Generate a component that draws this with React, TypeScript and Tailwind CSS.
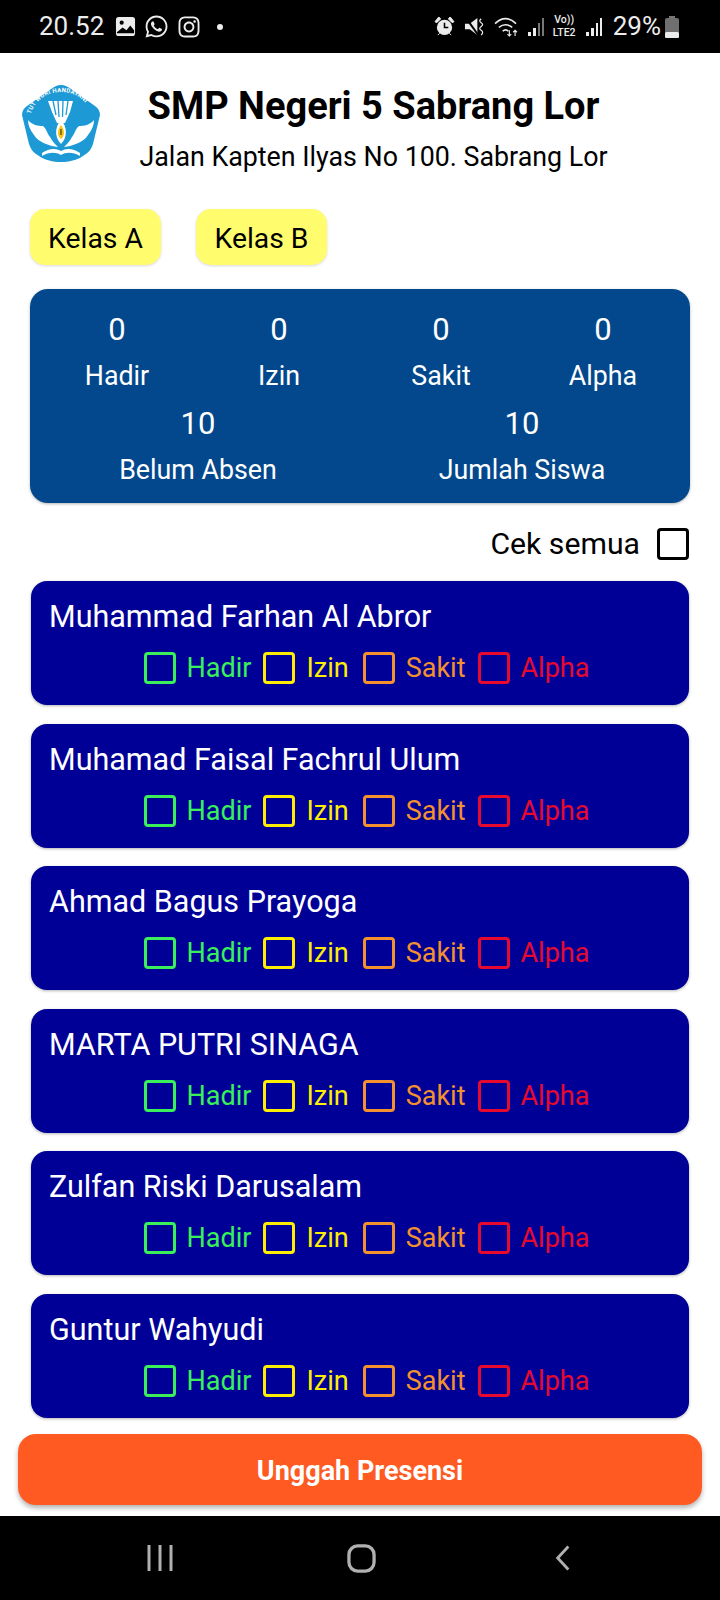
import { FaInstagram, FaWhatsapp } from 'react-icons/fa';

const students = [
  'Muhammad Farhan Al Abror',
  'Muhamad Faisal Fachrul Ulum',
  'Ahmad Bagus Prayoga',
  'MARTA PUTRI SINAGA',
  'Zulfan Riski Darusalam',
  'Guntur Wahyudi',
];

const statuses = [
  { label: 'Hadir', box: 'border-[#39f05a]', text: 'text-[#39f05a]', gap: 'mr-[12px]' },
  { label: 'Izin', box: 'border-[#ffee00]', text: 'text-[#ffee00]', gap: 'mr-[14px]' },
  { label: 'Sakit', box: 'border-[#f2912e]', text: 'text-[#f2912e]', gap: 'mr-[12px]' },
  { label: 'Alpha', box: 'border-[#e8092e]', text: 'text-[#e8092e]', gap: '' },
];

function Logo() {
  return (
    <svg viewBox="0 0 80 80" className="w-[80px] h-[80px] shrink-0">
      <path d="M40 1 C44 1 47 3 50 5 L74 22 C77 24 79 27 79 31 L72 60 C70 66 67 69 62 72 C50 80 30 80 18 72 C13 69 10 66 8 60 L1 31 C1 27 3 24 6 22 L30 5 C33 3 36 1 40 1 Z" fill="#1d9ad6" />
      <path id="logoArc" d="M9 32 C14 15 27 8 40 8 C53 8 66 15 71 32" fill="none" />
      <text fontSize="6" fontWeight="700" fill="#fff" fontFamily="Roboto, sans-serif" letterSpacing="0.3">
        <textPath href="#logoArc" startOffset="2">TUT WURI HANDAYANI</textPath>
      </text>
      <path d="M27 17 L52 17 L49 28 L44 39 L36 39 L31 28 Z" fill="#fff" />
      <path d="M32 17 L35 31 M37 17 L38 33 M42 17 L41.500 33 M47 17 L45 31" stroke="#1d9ad6" strokeWidth="1.3" fill="none" />
      <path d="M7 36 C11 41 17 42 22 42 C25 44 26 49 29 53 C31 57 34 60 37 63 C28 62 17 58 13 51 C9 46 7 41 7 36 Z" fill="#fff" />
      <path d="M73 36 C69 41 63 42 58 42 C55 44 54 49 51 53 C49 57 46 60 43 63 C52 62 63 58 67 51 C71 46 73 41 73 36 Z" fill="#fff" />
      <path d="M40 36 C46 42 47 53 40 60 C33 53 34 42 40 36 Z" fill="#fff" />
      <path d="M40 41 C44 46 44 52 40 55 C36 52 36 46 40 41 Z" fill="#f5c518" />
      <path d="M40 45 V51" stroke="#222" strokeWidth="1" />
      <path d="M21 69 C28 64 35 64 40 67 C45 64 52 64 59 69 L59 72 C52 68 45 68 40 71 C35 68 28 68 21 72 Z" fill="#fff" />
    </svg>
  );
}

function StatusBar() {
  return (
    <div className="h-[53px] shrink-0 bg-black text-[#ececec] flex items-center pl-[39px] pr-[41px] text-[26px] font-['Roboto',sans-serif]">
      <span className="mr-[11px]">20.52</span>
      <svg viewBox="0 0 22 22" className="w-[21px] h-[21px] mr-[8px]">
        <rect x="1" y="1" width="20" height="20" rx="3" fill="#ececec" />
        <circle cx="7" cy="7" r="2.2" fill="#000" />
        <path d="M2 17 L8 12 L12 15 L16 10 L20 15 V18 H2 Z" fill="#000" />
      </svg>
      <FaWhatsapp className="w-[25px] h-[25px] mr-[8px]" />
      <FaInstagram className="w-[24px] h-[24px] mr-[16px]" />
      <span className="w-[6px] h-[6px] rounded-full bg-[#ececec]" />
      <div className="ml-auto flex items-center">
        <svg viewBox="0 0 22 22" className="w-[21px] h-[21px] mr-[9px]">
          <circle cx="11" cy="12" r="8" fill="#ececec" />
          <path d="M11 7 V12 H15" stroke="#000" strokeWidth="1.6" fill="none" />
          <path d="M1 6 L5 1 L7 3 L3 7 Z M21 6 L17 1 L15 3 L19 7 Z M4 20 L6 18 M18 20 L16 18" fill="#ececec" stroke="#ececec" />
        </svg>
        <svg viewBox="0 0 22 22" className="w-[21px] h-[21px] mr-[8px]">
          <path d="M1 8 H6 L14 2 V20 L6 14 H1 Z" fill="#ececec" />
          <path d="M2 2 L15 20" stroke="#000" strokeWidth="2" />
          <path d="M18 3 Q15 5 18 7 Q21 9 18 11 Q15 13 18 15 Q21 17 18 20" stroke="#ececec" strokeWidth="1.3" fill="none" />
        </svg>
        <svg viewBox="0 0 28 22" className="w-[27px] h-[21px] mr-[7px]">
          <path d="M2 8 C9 1 17 1 24 8 M6 12 C11 8 15 8 20 12 M10 16 C12 14 14 14 16 16" stroke="#ececec" strokeWidth="1.7" fill="none" />
          <path d="M17 15 V21 M15 19 L17 21 L19 19 M23 21 V15 M21 17 L23 15 L25 17" stroke="#ececec" strokeWidth="1.2" fill="none" />
        </svg>
        <svg viewBox="0 0 18 20" className="w-[18px] h-[20px] mr-[6px]">
          <rect x="1" y="15" width="3" height="4" fill="#ececec" />
          <rect x="6" y="11" width="3" height="8" fill="#ececec" />
          <rect x="11" y="6" width="2" height="13" fill="#777" />
          <rect x="15" y="1" width="2" height="18" fill="#777" />
        </svg>
        <div className="text-center text-[10.5px] leading-[12.5px] font-medium mr-[7px] w-[27px]">
          Vo))<br />LTE2
        </div>
        <svg viewBox="0 0 18 20" className="w-[18px] h-[20px] mr-[10px]">
          <rect x="1" y="15" width="3" height="4" fill="#ececec" />
          <rect x="6" y="11" width="3" height="8" fill="#ececec" />
          <rect x="11" y="6" width="2" height="13" fill="#ececec" />
          <rect x="15" y="1" width="2" height="18" fill="#ececec" />
        </svg>
        <span className="mr-[4px]">29%</span>
        <svg viewBox="0 0 14 22" className="w-[14px] h-[22px]">
          <rect x="4" y="0" width="6" height="2" fill="#777" />
          <rect x="0" y="2" width="14" height="20" rx="2" fill="#6f6f6f" />
          <rect x="0" y="16" width="14" height="6" rx="1.5" fill="#ececec" />
        </svg>
      </div>
    </div>
  );
}

function Box({ className }: { className: string }) {
  return <span className={`w-[32px] h-[32px] shrink-0 border-[3px] rounded-[4px] ${className}`} />;
}

function StudentCard({ name }: { name: string }) {
  return (
    <div className="h-[124px] rounded-[16px] bg-[#000096] pl-[18px] pr-[18px] pt-[17px] shadow-[0_1px_3px_rgba(0,0,0,0.3)]">
      <div className="text-white text-[30.5px] leading-[38px]">{name}</div>
      <div className="mt-[16px] flex justify-center items-center pl-[13px] text-[27px] leading-[32px]">
        {statuses.map(s => (
          <div key={s.label} className={`flex items-center ${s.gap}`}>
            <Box className={s.box} />
            <span className={`ml-[11px] ${s.text}`}>{s.label}</span>
          </div>
        ))}
      </div>
    </div>
  );
}

export default function App() {
  const topStats = [
    { value: 0, label: 'Hadir' },
    { value: 0, label: 'Izin' },
    { value: 0, label: 'Sakit' },
    { value: 0, label: 'Alpha' },
  ];
  const bottomStats = [
    { value: 10, label: 'Belum Absen' },
    { value: 10, label: 'Jumlah Siswa' },
  ];

  return (
    <div className="w-[720px] h-[1600px] flex flex-col bg-white font-['Roboto',sans-serif]">
      <StatusBar />
      <div className="flex-1 flex flex-col">
        <div className="flex items-start pl-[21px] pt-[31px]">
          <Logo />
          <div className="flex-1 flex flex-col items-center pr-[74px]">
            <div className="text-black font-bold text-[38px] leading-[44px]">SMP Negeri 5 Sabrang Lor</div>
            <div className="text-black text-[26.8px] leading-[36px] mt-[11px]">Jalan Kapten Ilyas No 100. Sabrang Lor</div>
          </div>
        </div>

        <div className="flex gap-[35px] pl-[30px] mt-[34px]">
          <button className="w-[131px] h-[56px] pt-[4px] rounded-[15px] bg-[#fffd6d] text-black text-[28.3px] shadow-[0_1px_3px_rgba(0,0,0,0.15)]">Kelas A</button>
          <button className="w-[131px] h-[56px] pt-[4px] rounded-[15px] bg-[#fffd6d] text-black text-[28.3px] shadow-[0_1px_3px_rgba(0,0,0,0.15)]">Kelas B</button>
        </div>

        <div className="mx-[30px] mt-[24px] h-[214px] rounded-[18px] bg-[#03488c] px-[6px] pt-[17px] text-white text-[26.8px] leading-[47px] shadow-[0_1px_3px_rgba(0,0,0,0.3)]">
          <div className="grid grid-cols-4 text-center">
            {topStats.map(s => (
              <div key={s.label}>
                <div className="text-[31px]">{s.value}</div>
                <div>{s.label}</div>
              </div>
            ))}
          </div>
          <div className="grid grid-cols-2 text-center">
            {bottomStats.map(s => (
              <div key={s.label}>
                <div className="text-[31px]">{s.value}</div>
                <div>{s.label}</div>
              </div>
            ))}
          </div>
        </div>

        <div className="flex justify-end items-center mt-[25px] pr-[31px] text-black text-[30.2px] leading-[32px]">
          <span>Cek semua</span>
          <Box className="ml-[17px] border-black" />
        </div>

        <div className="mx-[31px] mt-[21px] flex flex-col gap-[18.5px]">
          {students.map(n => (
            <StudentCard key={n} name={n} />
          ))}
        </div>

        <button className="mx-[18px] mt-[16px] h-[71px] pt-[5px] rounded-[18px] bg-[#ff5a22] text-white font-bold text-[27px] shadow-[0_3px_5px_rgba(0,0,0,0.3)]">
          Unggah Presensi
        </button>
      </div>
      <div className="h-[84px] shrink-0 bg-black flex items-center pl-[147px]">
        <svg viewBox="0 0 26 28" className="w-[26px] h-[28px]">
          <path d="M2 1 V27 M13 1 V27 M24 1 V27" stroke="#b0b0b0" strokeWidth="3" />
        </svg>
        <svg viewBox="0 0 30 30" className="w-[29px] h-[29px] ml-[174px]">
          <rect x="2" y="2" width="26" height="26" rx="9" stroke="#b0b0b0" strokeWidth="3.4" fill="none" />
        </svg>
        <svg viewBox="0 0 18 30" className="w-[16px] h-[28px] ml-[179px]">
          <path d="M15 2 L3 15 L15 28" stroke="#b0b0b0" strokeWidth="3.2" fill="none" />
        </svg>
      </div>
    </div>
  );
}
